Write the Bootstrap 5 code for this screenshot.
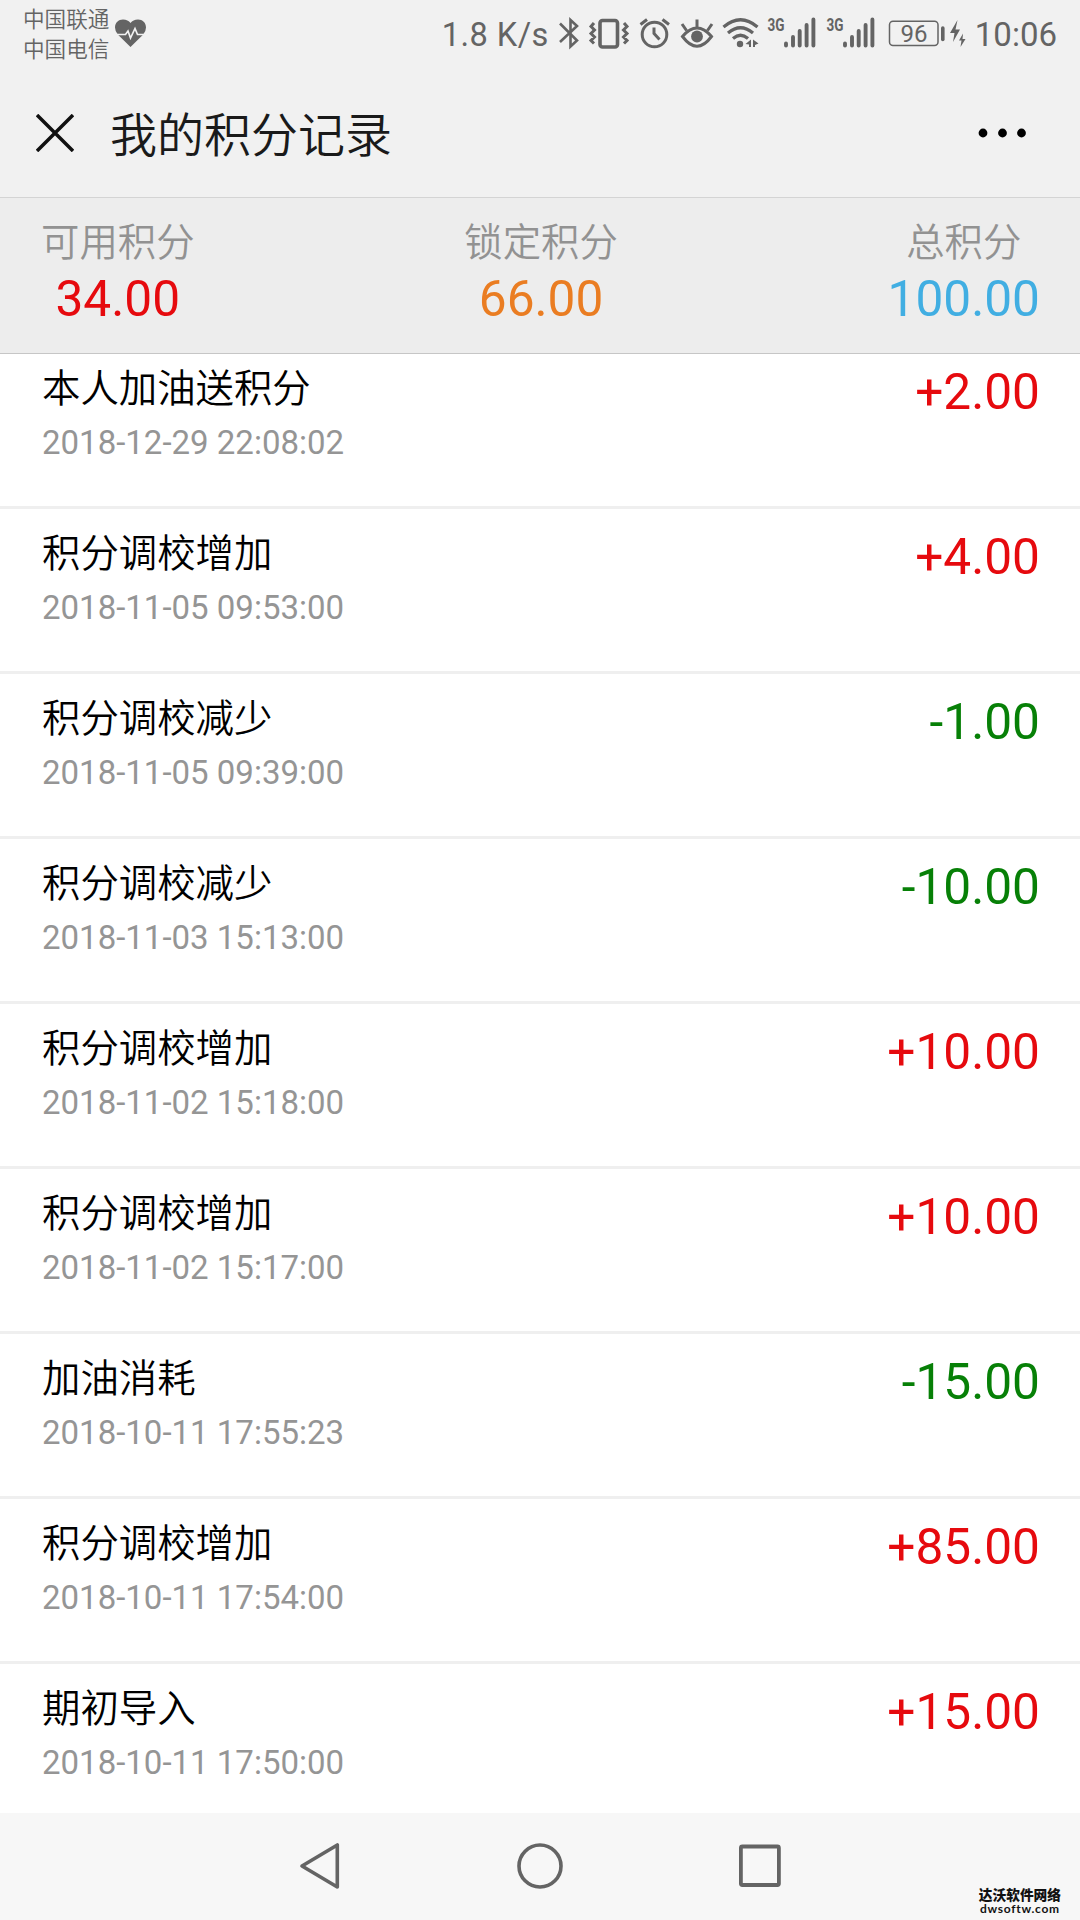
<!DOCTYPE html>
<html lang="zh-CN">
<head>
<meta charset="utf-8">
<meta name="viewport" content="width=device-width, initial-scale=1">
<title>我的积分记录</title>
<link href="https://cdn.jsdelivr.net/npm/bootstrap@5.3.0/dist/css/bootstrap.min.css" rel="stylesheet">
<style>
  body { font-family: Roboto, "Noto Sans CJK SC", sans-serif; background: #fff; color: #000; }
  .screen { width: 1080px; height: 1920px; }
  .cjk { font-family: "Noto Sans CJK SC", sans-serif; font-weight: 350; }
  svg { display: block; flex: none; }

  .status-bar { height: 78px; background: #f1f1f1; color: #646464; padding: 0 23px 12px; }
  .carriers { font-size: 21.6px; line-height: 29.5px; padding-top: 3px; }
  .speed { font-size: 32.6px; line-height: 40px; margin-top: 15px; letter-spacing: .45px; }
  .clock { font-size: 33px; line-height: 40px; margin-top: 15px; }
  .ic { fill: none; stroke: #646464; stroke-width: 3; }
  .ic .solid { fill: #646464; stroke: none; }
  .ic text { fill: #646464; stroke: none; }

  .title-bar { height: 120px; background: #f1f1f1; border-bottom: 1px solid #d4d4d4; padding: 0 53px 10px 36px; }
  .page-title { font-size: 47px; line-height: 60px; margin: -2px 0 0 36px; color: #1a1a1a; }

  .summary { height: 156px; background: #ededed; border-bottom: 1px solid #c6c6c6; padding: 15px 40px 0 41px; }
  .summary-label { font-size: 38.4px; line-height: 52px; color: #929292; }
  .figure-num { font-size: 49.6px; line-height: 60px; }
  .summary .figure-num { margin-top: 4px; }
  .c-red { color: #e60a0e; }
  .c-orange { color: #ea7d22; }
  .c-blue { color: #41aee2; }
  .c-green { color: #078007; }

  .records .list-group { margin-top: -10px; }
  .record { height: 165px; padding: 16px 40px 0 42px; border: 0; background: #fff; }
  .list-group-flush > .record { border: solid #efefef; border-width: 0 0 3px; }
  .record .figure-num { margin-top: 2px; }
  .record-name { font-size: 38.4px; line-height: 50px; color: #000; }
  .record-time { font-size: 33px; line-height: 44px; margin-top: 11px; color: #959595; }

  .nav-keys { height: 107px; background: #f7f7f7; padding: 0 298px 2px; }
  .watermark { right: 19px; bottom: 5px; color: #111; text-align: center; }
  .watermark-cn { font-family: "Noto Sans CJK SC", sans-serif; font-weight: 900; font-size: 13.7px; line-height: 18px; }
  .watermark-url { font-family: Lato, sans-serif; font-weight: 700; font-size: 12px; line-height: 12px; letter-spacing: .7px; }
</style>
</head>
<body>
<div class="screen d-flex flex-column position-relative overflow-hidden">

  <header class="status-bar d-flex align-items-start flex-shrink-0">
    <div class="carriers cjk">中国联通<br>中国电信</div>
    <svg class="ic ms-1" width="34" height="66" viewBox="113 0 34 66">
      <path class="solid" d="M130.500 47L118 34.800Q115 31.500 115 27.500C115 22.500 118.500 19.500 123 19.500Q128 19.500 130.500 23Q133 19.500 138 19.500C142.500 19.500 146 22.500 146 27.500Q146 31.500 143 34.800Z"/>
      <path d="M114.500 34.500H125.500L128 31L130.500 38L135 28.500L137.500 34.500H146.500" style="stroke:#f1f1f1;stroke-width:1.7"/>
    </svg>
    <div class="d-flex ms-auto">
      <div class="speed">1.8 K/s</div>
      <svg class="ic ms-2" width="30" height="66" viewBox="557 0 30 66">
        <path stroke-width="2.600" d="M560 23.500L577 40.500L570.500 46.500V20L577 26L560 42"/>
      </svg>
      <svg class="ic" width="50" height="66" viewBox="587 0 50 66">
        <rect x="600" y="20.500" width="17.500" height="26.500" rx="2.500" stroke-width="3.600"/>
        <path stroke-width="3" d="M594 23L591 26.500L594.500 30L591 33.500L594.500 37L591 40.500L594 43.500M624 23L627 26.500L623.500 30L627 33.500L623.500 37L627 40.500L624 43.500"/>
      </svg>
      <svg class="ic" width="40" height="66" viewBox="637 0 40 66">
        <circle cx="654.500" cy="34.500" r="12.300"/>
        <path d="M654 27.500V33.500L659.500 39.500M640.500 24.500L647 19.500M662.500 19.500L669 24.500"/>
      </svg>
      <svg class="ic" width="44" height="66" viewBox="677 0 44 66">
        <path stroke-width="3" d="M682.500 36.500Q697 19.500 711.500 36.500Q697 56 682.500 36.500ZM697 19.500V27M682 24L686.500 30.500M712 24L707.500 30.500"/>
        <circle class="solid" cx="697" cy="36.500" r="5.900"/>
      </svg>
      <svg class="ic" width="44" height="66" viewBox="721 0 44 66">
        <path stroke-width="3.200" d="M723.500 27Q740.500 12.500 757.500 27M728 33Q740.500 22.500 753 33M733 38.500Q740.500 32 748 38.500"/>
        <circle class="solid" cx="740" cy="44" r="3.200"/>
        <path class="solid" d="M745.500 44L751 39.500V47H749V44.500ZM753 39.500L758.500 43.500L755 45V47H753Z"/>
      </svg>
      <svg class="ic" width="59" height="66" viewBox="765 0 59 66">
        <text x="767.500" y="31" font-family="Roboto, sans-serif" font-size="18.500" font-weight="700" textLength="17" lengthAdjust="spacingAndGlyphs">3G</text>
        <path stroke-width="3.900" stroke-linecap="round" d="M786 43.500V45.500M793 37V45.500M799.700 31V45.500M806.600 25V45.500M813.400 19.500V45.500"/>
      </svg>
      <svg class="ic" width="59" height="66" viewBox="765 0 59 66">
        <text x="767.500" y="31" font-family="Roboto, sans-serif" font-size="18.500" font-weight="700" textLength="17" lengthAdjust="spacingAndGlyphs">3G</text>
        <path stroke-width="3.900" stroke-linecap="round" d="M786 43.500V45.500M793 37V45.500M799.700 31V45.500M806.600 25V45.500M813.400 19.500V45.500"/>
      </svg>
      <svg class="ic" width="92" height="66" viewBox="883 0 92 66">
        <rect x="889.500" y="21.200" width="48.500" height="24.300" rx="3.500" stroke-width="1.500"/>
        <text x="900.500" y="41.500" font-family="Roboto, sans-serif" font-size="24.500" textLength="27" lengthAdjust="spacingAndGlyphs">96</text>
        <path stroke-width="3.600" stroke-linecap="round" d="M942.800 28V39.500"/>
        <path class="solid" d="M957.500 20L950 33H954.500L953 42L960 29.500H955.500ZM963 33.500L959 40.500H961.500L960.500 47L965.500 39H962.500Z"/>
      </svg>
      <div class="clock">10:06</div>
    </div>
  </header>

  <nav class="title-bar d-flex align-items-center flex-shrink-0">
    <svg width="38" height="38" viewBox="0 0 38 38" fill="none" stroke="#111" stroke-width="3.500"><path d="M1 1L37 37M37 1L1 37"/></svg>
    <h1 class="page-title cjk">我的积分记录</h1>
    <svg class="ms-auto" width="50" height="12" viewBox="0 0 50 12"><circle cx="6" cy="6" r="4.400"/><circle cx="25.500" cy="6" r="4.400"/><circle cx="44.500" cy="6" r="4.400"/></svg>
  </nav>

  <section class="summary d-flex justify-content-between text-center flex-shrink-0">
    <div><div class="summary-label cjk">可用积分</div><div class="figure-num c-red">34.00</div></div>
    <div><div class="summary-label cjk">锁定积分</div><div class="figure-num c-orange">66.00</div></div>
    <div><div class="summary-label cjk">总积分</div><div class="figure-num c-blue">100.00</div></div>
  </section>

  <main class="records flex-grow-1 overflow-hidden">
    <ul class="list-group list-group-flush">
      <li class="list-group-item record d-flex justify-content-between"><div><div class="record-name cjk">本人加油送积分</div><div class="record-time">2018-12-29 22:08:02</div></div><div class="figure-num c-red">+2.00</div></li>
      <li class="list-group-item record d-flex justify-content-between"><div><div class="record-name cjk">积分调校增加</div><div class="record-time">2018-11-05 09:53:00</div></div><div class="figure-num c-red">+4.00</div></li>
      <li class="list-group-item record d-flex justify-content-between"><div><div class="record-name cjk">积分调校减少</div><div class="record-time">2018-11-05 09:39:00</div></div><div class="figure-num c-green">-1.00</div></li>
      <li class="list-group-item record d-flex justify-content-between"><div><div class="record-name cjk">积分调校减少</div><div class="record-time">2018-11-03 15:13:00</div></div><div class="figure-num c-green">-10.00</div></li>
      <li class="list-group-item record d-flex justify-content-between"><div><div class="record-name cjk">积分调校增加</div><div class="record-time">2018-11-02 15:18:00</div></div><div class="figure-num c-red">+10.00</div></li>
      <li class="list-group-item record d-flex justify-content-between"><div><div class="record-name cjk">积分调校增加</div><div class="record-time">2018-11-02 15:17:00</div></div><div class="figure-num c-red">+10.00</div></li>
      <li class="list-group-item record d-flex justify-content-between"><div><div class="record-name cjk">加油消耗</div><div class="record-time">2018-10-11 17:55:23</div></div><div class="figure-num c-green">-15.00</div></li>
      <li class="list-group-item record d-flex justify-content-between"><div><div class="record-name cjk">积分调校增加</div><div class="record-time">2018-10-11 17:54:00</div></div><div class="figure-num c-red">+85.00</div></li>
      <li class="list-group-item record d-flex justify-content-between"><div><div class="record-name cjk">期初导入</div><div class="record-time">2018-10-11 17:50:00</div></div><div class="figure-num c-red">+15.00</div></li>
    </ul>
  </main>

  <footer class="nav-keys d-flex justify-content-between align-items-center flex-shrink-0">
    <svg width="46" height="50" viewBox="0 0 46 50" fill="none" stroke="#646464" stroke-width="3.600" stroke-linejoin="round"><path d="M39.300 4V46L4 25Z"/></svg>
    <svg width="50" height="50" viewBox="0 0 50 50" fill="none" stroke="#646464" stroke-width="3.600"><circle cx="25" cy="25" r="21"/></svg>
    <svg width="46" height="50" viewBox="0 0 46 50" fill="none" stroke="#646464" stroke-width="3.800"><rect x="4.900" y="5.500" width="38" height="38.500" rx="1.500"/></svg>
  </footer>

  <div class="watermark position-absolute">
    <div class="watermark-cn">达沃软件网络</div>
    <div class="watermark-url">dwsoftw.com</div>
  </div>
</div>
<script src="https://cdn.jsdelivr.net/npm/bootstrap@5.3.0/dist/js/bootstrap.bundle.min.js"></script>
</body>
</html>
